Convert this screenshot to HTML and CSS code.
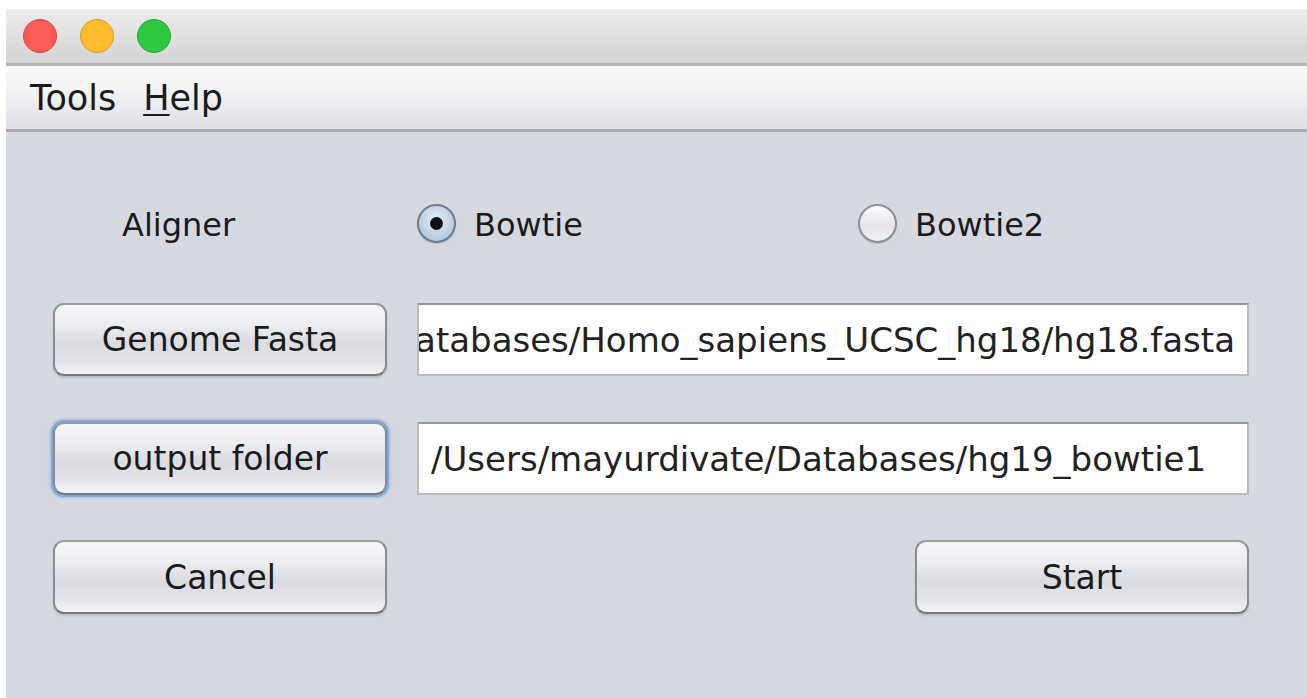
FILE: index.html
```html
<!DOCTYPE html>
<html lang="en">
<head>
<meta charset="utf-8">
<title>Index Builder</title>
<link rel="stylesheet" href="styles.css">
</head>
<body>
<div class="window">
  <div class="titlebar">
    <span class="light light-close"></span>
    <span class="light light-min"></span>
    <span class="light light-max"></span>
  </div>
  <div class="menubar">
    <span class="menu">Tools</span>
    <span class="menu"><u>H</u>elp</span>
  </div>
  <div class="content">
    <div class="row row-aligner">
      <div class="label-cell"><span class="label">Aligner</span></div>
      <div class="radio-group">
        <label class="radio"><span class="radio-dot checked"></span><span>Bowtie</span></label>
        <label class="radio"><span class="radio-dot"></span><span>Bowtie2</span></label>
      </div>
    </div>
    <div class="row row-field">
      <button class="btn">Genome Fasta</button>
      <div class="field field-end"><span class="field-text">/Users/mayurdivate/Databases/Homo_sapiens_UCSC_hg18/hg18.fasta</span></div>
    </div>
    <div class="row row-field">
      <button class="btn btn-focus">output folder</button>
      <div class="field"><span class="field-text">/Users/mayurdivate/Databases/hg19_bowtie1</span></div>
    </div>
    <div class="row row-actions">
      <button class="btn">Cancel</button>
      <button class="btn">Start</button>
    </div>
  </div>
</div>
</body>
</html>
```
FILE: styles.css
```css
html, body {
  margin: 0;
  padding: 0;
  height: 100%;
  background: #ffffff;
  overflow: hidden;
}

body {
  font-family: "DejaVu Sans", "Liberation Sans", sans-serif;
  color: #1b1b1b;
}

.window {
  margin: 9px 0 0 6px;
  height: calc(100% - 9px);
  display: flex;
  flex-direction: column;
  background: #d7d9e0;
}

/* title bar with the three window buttons */
.titlebar {
  height: 54px;
  flex: none;
  display: flex;
  align-items: center;
  gap: 23px;
  padding-left: 17px;
  background: linear-gradient(#ededed, #d4d4d4);
  border-bottom: 3px solid #b6b6b6;
}

.light {
  width: 34px;
  height: 34px;
  border-radius: 50%;
  box-sizing: border-box;
  margin-top: -1px;
}

.light-close { background: #fc5b57; border: 1px solid #e0443f; }
.light-min { background: #fdbc2e; border: 1px solid #de9f27; }
.light-max { background: #2ec840; border: 1px solid #25a533; }

/* menu bar */
.menubar {
  height: 63px;
  flex: none;
  display: flex;
  align-items: center;
  gap: 27px;
  padding-left: 24px;
  font-size: 35px;
  background: linear-gradient(#f9f9fa, #f2f3f5 40%, #dfe0e6);
  border-bottom: 3px solid #a9aab0;
}

.menu u {
  text-decoration-thickness: 2px;
  text-underline-offset: 4px;
}

/* dialog body */
.content {
  flex: 1;
  padding: 71px 58px 0 47px;
  font-size: 32px;
}

.row {
  display: flex;
  align-items: center;
}

.row-aligner {
  height: 40px;
  margin-bottom: 60px;
}

.label-cell {
  width: 364px;
  flex: none;
  padding-left: 69px;
  padding-top: 4px;
  box-sizing: border-box;
}

.radio-group {
  display: grid;
  grid-template-columns: 441px 1fr;
  flex: 1;
}

.radio {
  display: flex;
  align-items: center;
  gap: 18px;
}

.radio span:last-child {
  padding-top: 4px;
}

.radio-dot {
  width: 39px;
  height: 39px;
  box-sizing: border-box;
  border-radius: 50%;
  border: 2px solid #8d8f95;
  background: linear-gradient(#fdfdfd, #e4e5e9 55%, #f2f3f6);
  box-shadow: 0 1px 1px rgba(0, 0, 0, 0.15);
  display: flex;
  align-items: center;
  justify-content: center;
}

.radio-dot.checked {
  border-color: #6f7d8f;
  background: radial-gradient(circle at 50% 40%, #e9f0f8, #b5c8dc 75%, #9fb3c9);
}

.radio-dot.checked::after {
  content: "";
  width: 13px;
  height: 13px;
  border-radius: 50%;
  background: #111;
}

.row-field {
  height: 73px;
  gap: 30px;
  margin-bottom: 46px;
}

.row-field + .row-field {
  margin-bottom: 45px;
}

.btn {
  width: 334px;
  height: 73px;
  flex: none;
  font-family: inherit;
  font-size: 33px;
  color: #1b1b1b;
  border: 2px solid #8c8d91;
  border-top-color: #9a9b9f;
  border-bottom-color: #75767a;
  border-radius: 11px;
  background: linear-gradient(#f6f6f8, #ecedf1 30%, #dadce2 55%, #e2e4ea 80%, #f3f4f8);
  box-shadow: 0 2px 2px rgba(0, 0, 0, 0.12);
  padding: 0;
}

.btn-focus {
  box-shadow: 0 0 0 2px #7fa9d8, 0 0 3px 3px rgba(110, 155, 210, 0.45);
}

.field {
  flex: 1;
  height: 73px;
  box-sizing: border-box;
  background: #ffffff;
  border: 2px solid #b9babe;
  border-top-color: #96979b;
  display: flex;
  align-items: center;
  overflow: hidden;
  padding: 0 12px;
  font-size: 34px;
  color: #222;
}

.field-end {
  justify-content: flex-end;
}

.field-text {
  white-space: nowrap;
  flex: none;
}

.row-actions {
  height: 74px;
  justify-content: space-between;
}

.row-actions .btn {
  height: 74px;
}
```
